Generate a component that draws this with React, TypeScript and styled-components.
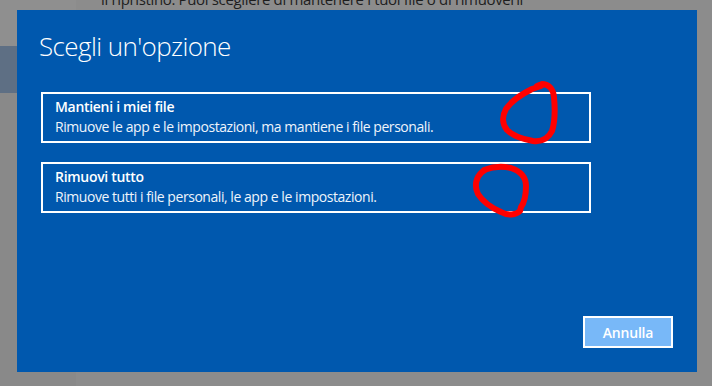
import { memo } from 'react';
import styled, { createGlobalStyle } from 'styled-components';

const GlobalStyle = createGlobalStyle`
  html, body {
    margin: 0;
    padding: 0;
    width: 712px;
    height: 386px;
    overflow: hidden;
    background-color: #8c8c8c;
  }
  * {
    box-sizing: border-box;
  }
`;

const StyledPage = styled.div`
  position: relative;
  width: 712px;
  height: 386px;
  display: flex;
  overflow: hidden;
  font-family: 'Open Sans', 'Noto Sans', Arial, sans-serif;
`;
const StyledSidebar = styled.div`
  width: 76px;
  display: flex;
  flex-direction: column;
  background-color: #898989;
`;
const StyledSideBlock = styled.div<{ $height: number; $color: string }>`
  height: ${(p) => p.$height}px;
  background-color: ${(p) => p.$color};
`;
const StyledMain = styled.div`
  flex: 1;
  padding-left: 25px;
  background-color: #8c8c8c;
`;
const StyledIntro = styled.div`
  margin-top: -11px;
  font-size: 15px;
  line-height: 20px;
  color: #1e1e1e;
  letter-spacing: -0.35px;
  white-space: nowrap;
`;

const StyledDialog = styled.div`
  position: absolute;
  left: 17px;
  top: 10px;
  width: 680px;
  height: 362px;
  background-color: #0058ae;
  display: flex;
  flex-direction: column;
  padding: 19px 24px 24px 24px;
  color: #fff;
`;
const StyledTitle = styled.h1`
  margin: 0 0 29px -2px;
  font-size: 26px;
  line-height: 34px;
  font-weight: 300;
  letter-spacing: -0.6px;
`;
const StyledOptions = styled.div`
  display: flex;
  flex-direction: column;
  gap: 19px;
`;
const StyledOption = styled.div`
  width: 550px;
  height: 51px;
  border: 2px solid #fff;
  padding: 3px 12px;
  cursor: pointer;
`;
const StyledOptionTitle = styled.div`
  font-size: 14px;
  line-height: 20px;
  font-weight: 600;
  letter-spacing: -0.3px;
`;
const StyledOptionText = styled.div`
  font-size: 14px;
  line-height: 20px;
  letter-spacing: -0.45px;
  color: #eef4fb;
`;
const StyledFooter = styled.div`
  margin-top: auto;
  display: flex;
  justify-content: flex-end;
`;
const StyledButton = styled.button`
  width: 90px;
  height: 32px;
  border: 2px solid #fff;
  background-color: #78b8f8;
  color: #fff;
  font-family: 'Open Sans', 'Noto Sans', Arial, sans-serif;
  font-size: 14px;
  font-weight: 600;
  letter-spacing: -0.2px;
  padding: 0;
`;
const StyledMarks = styled.svg`
  position: absolute;
  left: 0;
  top: 0;
  pointer-events: none;
`;

const options = [
  {
    title: 'Mantieni i miei file',
    text: 'Rimuove le app e le impostazioni, ma mantiene i file personali.',
  },
  {
    title: 'Rimuovi tutto',
    text: 'Rimuove tutti i file personali, le app e le impostazioni.',
  },
];

const App = () => {
  return (
    <StyledPage>
      <GlobalStyle />
      <StyledSidebar>
        <StyledSideBlock $height={46} $color="#8f8f8f" />
        <StyledSideBlock $height={47} $color="#5e6f84" />
      </StyledSidebar>
      <StyledMain>
        <StyledIntro>il ripristino. Puoi scegliere di mantenere i tuoi file o di rimuoverli</StyledIntro>
      </StyledMain>

      <StyledDialog>
        <StyledTitle>Scegli un'opzione</StyledTitle>
        <StyledOptions>
          {options.map((o) => (
            <StyledOption key={o.title}>
              <StyledOptionTitle>{o.title}</StyledOptionTitle>
              <StyledOptionText>{o.text}</StyledOptionText>
            </StyledOption>
          ))}
        </StyledOptions>
        <StyledFooter>
          <StyledButton>Annulla</StyledButton>
        </StyledFooter>
      </StyledDialog>

      <StyledMarks width="712" height="386" viewBox="0 0 712 386">
        <g fill="none" stroke="#ff0000" strokeWidth="6" strokeLinecap="round" strokeLinejoin="round">
          <path d="M537 86 L542 84 C548 84 553 88 554 97 C555 108 555 122 552 131 C548 139 541 142 533 141 C522 139 512 135 507 130 C502 124 502 116 506 109 C512 100 522 94 532 89 L541 86" />
          <path d="M484 170 C492 167 502 166 511 168 C520 171 526 177 526 186 C526 195 524 203 521 207 L520 211 C516 215 508 216 501 212 C492 208 483 202 478 194 C474 186 476 177 482 172 L485 170" />
        </g>
      </StyledMarks>
    </StyledPage>
  );
};

export default memo(App);
